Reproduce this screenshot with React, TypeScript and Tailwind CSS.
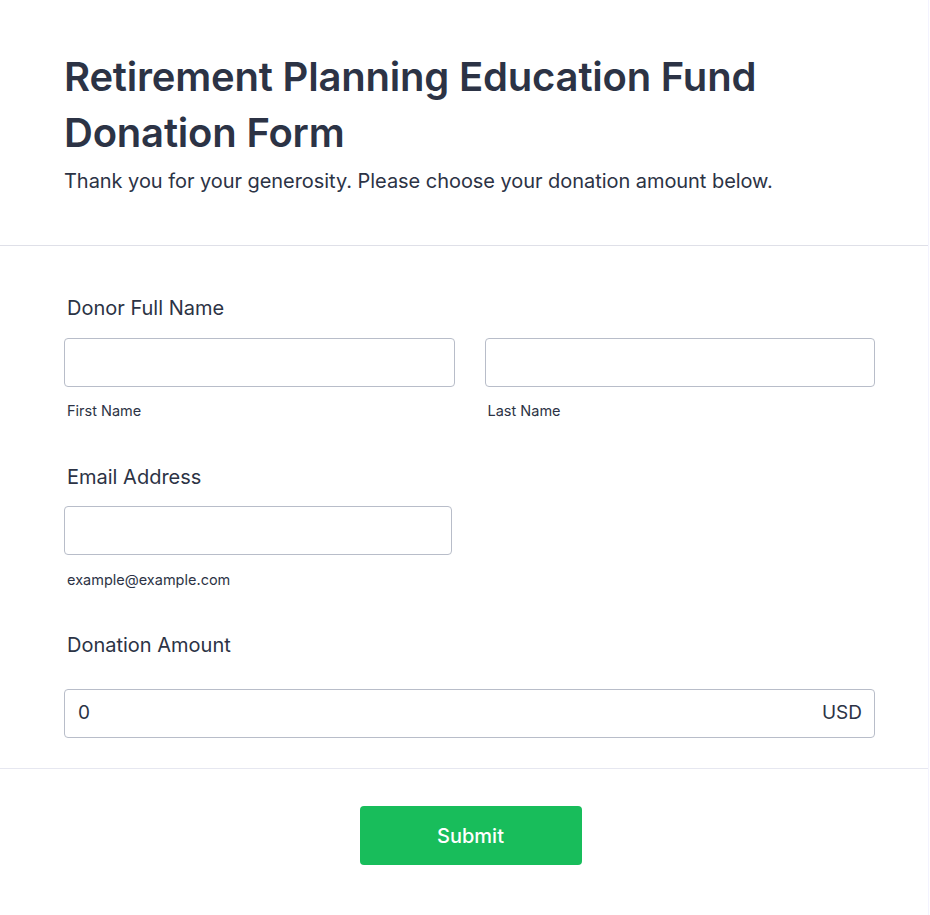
import React from "react";

export default function App() {
  const font = { fontFamily: "Inter, 'Noto Sans', sans-serif" };
  return (
    <div className="min-h-[915px] w-[930px] bg-white text-[#2c3345]" style={font}>
      <div className="w-[929px] border-r border-[#f3f3fe] min-h-[915px]">
        <div className="pl-[64px] pr-[53px] pt-[49px] pb-[49px]">
          <h1 className="text-[40px] leading-[56px] font-semibold tracking-[-0.2px]">
            Retirement Planning Education Fund Donation Form
          </h1>
          <p className="text-[20px] leading-[30px] mt-[5px] tracking-[-0.05px]">
            Thank you for your generosity. Please choose your donation amount below.
          </p>
        </div>
        <div className="h-px bg-[#dfe0e8]" />
        <div className="pl-[64px] pr-[53px] pt-[48px]">
          <label className="block pl-[3px] text-[20px] leading-[28px] font-normal">Donor Full Name</label>
          <div className="mt-[16px] grid grid-cols-2 gap-x-[30px]">
            <div>
              <div className="h-[49px] rounded-[4px] border border-[#b8bdc9]" />
              <div className="mt-[14px] pl-[3px] text-[14.5px] leading-[20px]">First Name</div>
            </div>
            <div>
              <div className="h-[49px] rounded-[4px] border border-[#b8bdc9]" />
              <div className="mt-[14px] pl-[3px] text-[14.5px] leading-[20px]">Last Name</div>
            </div>
          </div>
          <label className="mt-[42px] block pl-[3px] text-[20px] leading-[28px] font-normal">Email Address</label>
          <div className="mt-[15px] w-[388px] h-[49px] rounded-[4px] border border-[#b8bdc9]" />
          <div className="mt-[15px] pl-[3px] text-[14.5px] leading-[20px]">example@example.com</div>
          <label className="mt-[41px] block pl-[3px] text-[20px] leading-[28px] font-normal">Donation Amount</label>
          <div className="mt-[30px] h-[49px] rounded-[4px] border border-[#b8bdc9] flex items-center justify-between pl-[13px] pr-[12px] text-[19px]">
            <span>0</span>
            <span>USD</span>
          </div>
        </div>
        <div className="mt-[30px] h-px bg-[#e6e7f0]" />
        <div className="flex justify-center pt-[37px] pl-[67px] pr-[54px]">
          <button className="w-[222px] h-[59px] rounded-[4px] bg-[#18bd5b] text-white text-[20px] font-medium">
            Submit
          </button>
        </div>
      </div>
    </div>
  );
}
